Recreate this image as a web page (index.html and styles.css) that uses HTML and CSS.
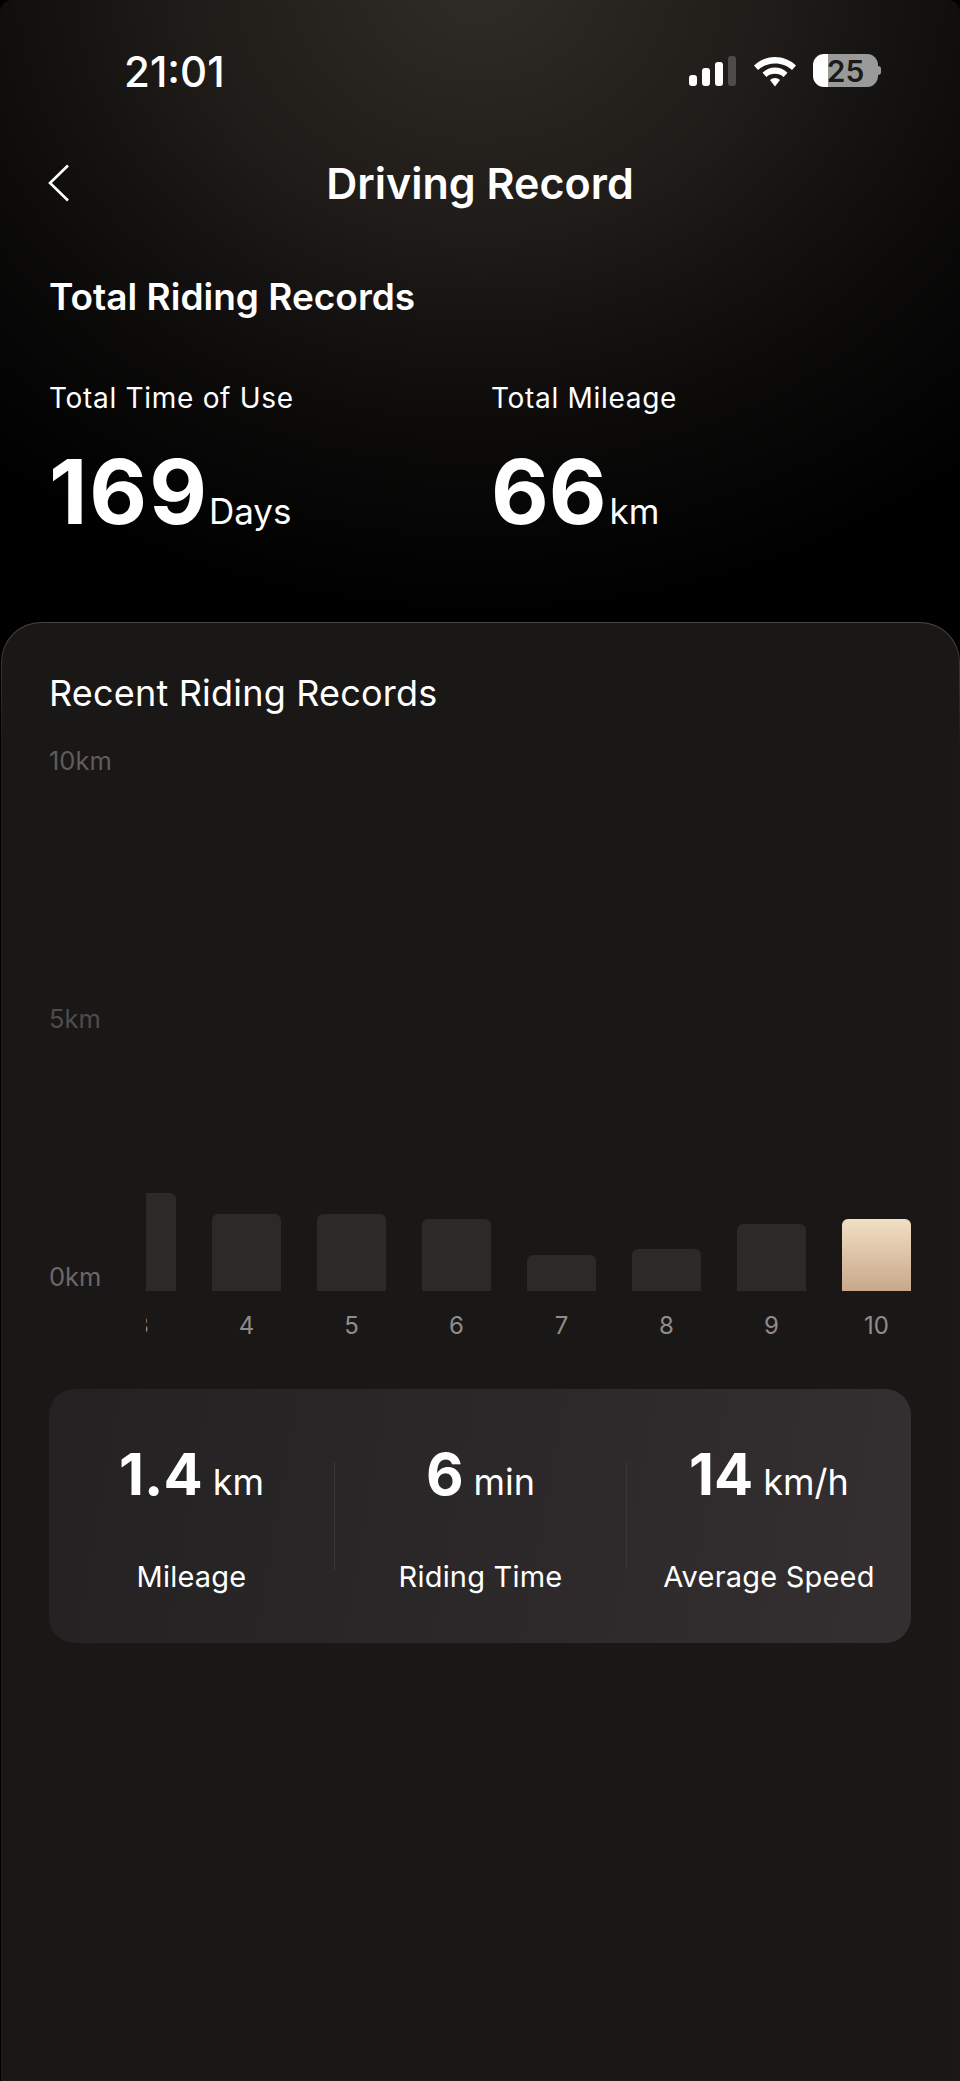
FILE: index.html
```html
<!DOCTYPE html>
<html lang="en">
<head>
<meta charset="utf-8">
<title>Driving Record</title>
<link rel="stylesheet" href="styles.css">
</head>
<body>
<div class="screen">
  <div class="status">
    <span class="clock">21:01</span>
    <div class="status-icons">
      <div class="signal"><i class="s1"></i><i class="s2"></i><i class="s3"></i><i class="s4"></i></div>
      <svg class="wifi" width="42" height="30" viewBox="0 0 42 30"><path d="M21 0C13 0 6 3 0 8.500L4 13C8.500 8.800 14.500 6.500 21 6.500S33.500 8.800 38 13L42 8.500C36 3 29 0 21 0Z" fill="#fff"/><path d="M21 10.500C16.500 10.500 12 12.300 8.500 15.700L12.400 20C14.700 17.800 17.700 16.700 21 16.700S27.300 17.800 29.600 20L33.500 15.700C30 12.300 25.500 10.500 21 10.500Z" fill="#fff"/><path d="M21 21C19 21 17.300 21.700 16 23L21 29.500L26 23C24.700 21.700 23 21 21 21Z" fill="#fff"/></svg>
      <div class="battery"><span class="battery-level">25</span><i class="battery-nub"></i></div>
    </div>
  </div>
  <div class="nav">
    <svg class="back" width="24" height="38" viewBox="0 0 24 38"><path d="M21 1.500L3 19L21 36.500" fill="none" stroke="#fff" stroke-width="2.600"/></svg>
    <h1 class="title">Driving Record</h1>
  </div>
  <h2 class="total-heading">Total Riding Records</h2>
  <div class="totals">
    <div class="total">
      <div class="total-label">Total Time of Use</div>
      <div class="total-value"><b class="spaced">169</b><span>Days</span></div>
    </div>
    <div class="total">
      <div class="total-label">Total Mileage</div>
      <div class="total-value"><b>66</b><span>km</span></div>
    </div>
  </div>
  <section class="card">
    <h2 class="recent">Recent Riding Records</h2>
    <div class="chart">
      <div class="axis"><span>10km</span><span>5km</span><span>0km</span></div>
      <div class="plot">
        <div class="col"><div class="bar-area"><div class="bar" style="height:98px"></div></div><span class="day">3</span></div>
        <div class="col"><div class="bar-area"><div class="bar" style="height:77px"></div></div><span class="day">4</span></div>
        <div class="col"><div class="bar-area"><div class="bar" style="height:77px"></div></div><span class="day">5</span></div>
        <div class="col"><div class="bar-area"><div class="bar" style="height:72px"></div></div><span class="day">6</span></div>
        <div class="col"><div class="bar-area"><div class="bar" style="height:36px"></div></div><span class="day">7</span></div>
        <div class="col"><div class="bar-area"><div class="bar" style="height:42px"></div></div><span class="day">8</span></div>
        <div class="col"><div class="bar-area"><div class="bar" style="height:67px"></div></div><span class="day">9</span></div>
        <div class="col"><div class="bar-area"><div class="bar active" style="height:72px"></div></div><span class="day">10</span></div>
      </div>
    </div>
    <div class="summary">
      <div class="metric"><div class="metric-value"><b>1.4</b><span>km</span></div><div class="metric-label">Mileage</div></div>
      <i class="divider"></i>
      <div class="metric"><div class="metric-value"><b>6</b><span>min</span></div><div class="metric-label">Riding Time</div></div>
      <i class="divider"></i>
      <div class="metric"><div class="metric-value"><b>14</b><span>km/h</span></div><div class="metric-label">Average Speed</div></div>
    </div>
  </section>
</div>
</body>
</html>
```
FILE: styles.css
```css
* { box-sizing: border-box; }
html, body { margin: 0; padding: 0; background: #000; }
body { font-family: Inter, "Noto Sans", sans-serif; color: #fff; }
h1, h2 { margin: 0; }
.screen {
  width: 960px;
  height: 2081px;
  overflow: hidden;
  display: flex;
  flex-direction: column;
  border-radius: 12px 12px 0 0;
  background: radial-gradient(ellipse 760px 640px at 480px -20px, #302c26 0%, #1f1c19 38%, #0c0b0a 70%, #000 100%), #000;
}
.status {
  height: 140px;
  padding: 50px 82px 0 124px;
  display: flex;
  justify-content: space-between;
  align-items: flex-start;
  flex: none;
}
.clock { font-size: 42px; line-height: 44px; font-weight: 500; }
.status-icons { display: flex; align-items: flex-start; padding-top: 4px; }
.signal { display: flex; align-items: flex-end; gap: 5px; height: 30px; margin-top: 2px; }
.signal i { width: 8px; border-radius: 3px; background: #fff; display: block; }
.s1 { height: 11px; }
.s2 { height: 18px; }
.s3 { height: 24px; }
.signal .s4 { height: 30px; background: #4d4c4a; }
.wifi { margin: 3px 17px 0 18px; }
.battery { position: relative; width: 65px; height: 33px; }
.battery-level {
  display: block;
  width: 65px;
  height: 33px;
  border-radius: 11px;
  background: linear-gradient(90deg, #fff 0, #fff 15px, #9a9a9a 15px);
  color: #1b1a18;
  font-size: 30px;
  line-height: 35px;
  font-weight: 600;
  text-align: center;
}
.battery-nub { position: absolute; right: -3px; top: 12px; width: 3px; height: 9px; border-radius: 0 4px 4px 0; background: #9a9a9a; }
.nav { position: relative; height: 86px; flex: none; display: flex; align-items: center; justify-content: center; }
.back { position: absolute; left: 47px; top: 24px; }
.title { font-size: 43px; line-height: 52px; font-weight: 600; }
.total-heading { margin: 49px 0 0 49px; font-size: 37px; line-height: 44px; font-weight: 600; flex: none; }
.totals { display: flex; padding: 0 49px; margin-top: 61px; flex: none; }
.total { width: 442px; flex: none; }
.total-label { font-size: 28px; line-height: 36px; letter-spacing: .7px; font-weight: 400; }
.total-value { margin-top: 31px; height: 90px; display: flex; align-items: baseline; gap: 3px; line-height: 90px; }
.total-value b { font-size: 89px; font-weight: 700; }
.total-value .spaced { letter-spacing: 2px; margin-right: -3px; }
.total-value span { font-size: 35px; }
.card {
  flex: 1;
  margin: 85px 0 0 1px;
  padding: 48px 48px 0 47px;
  border: 1px solid transparent;
  border-radius: 40px 40px 0 0;
  background: linear-gradient(#1a1717, #1a1717) padding-box, linear-gradient(#4a4541, #1c1919 120px) border-box;
}
.recent { font-size: 36px; line-height: 44px; font-weight: 400; letter-spacing: .2px; }
.chart { position: relative; display: flex; margin-top: 32px; }
.axis {
  width: 97px;
  height: 544px;
  flex: none;
  display: flex;
  flex-direction: column;
  justify-content: space-between;
  font-size: 25.500px;
  line-height: 28px;
  color: #5f5c5b;
}
.axis span:nth-child(2) { color: #4f4c4b; }
.axis span:last-child { color: #6b6867; }
.plot { flex: 1; display: flex; justify-content: flex-end; gap: 36px; overflow: hidden; }
.col { width: 69px; flex: none; display: flex; flex-direction: column; align-items: center; }
.bar-area { height: 544px; width: 100%; display: flex; align-items: flex-end; }
.bar { width: 100%; background: #2d2927; border-radius: 6px 6px 0 0; }
.bar.active { background: linear-gradient(#f1dfc4, #c9a88a); }
.day { margin-top: 20px; font-size: 24px; line-height: 30px; color: #8f8c8a; }
.summary {
  margin-top: 48px;
  height: 254px;
  border-radius: 26px;
  background: linear-gradient(100deg, #232122, #342f30);
  display: grid;
  grid-template-columns: 285px 1px 1fr 1px 284px;
  align-items: start;
}
.metric { display: flex; flex-direction: column; align-items: center; padding-top: 49px; }
.metric-value { display: flex; align-items: baseline; gap: 10px; height: 72px; line-height: 72px; }
.metric-value b { font-size: 58px; font-weight: 700; }
.metric-value span { font-size: 36px; }
.metric-label { margin-top: 47px; font-size: 29px; line-height: 40px; letter-spacing: .2px; }
.divider { width: 1px; height: 108px; margin-top: 73px; background: #3b3737; }
```
